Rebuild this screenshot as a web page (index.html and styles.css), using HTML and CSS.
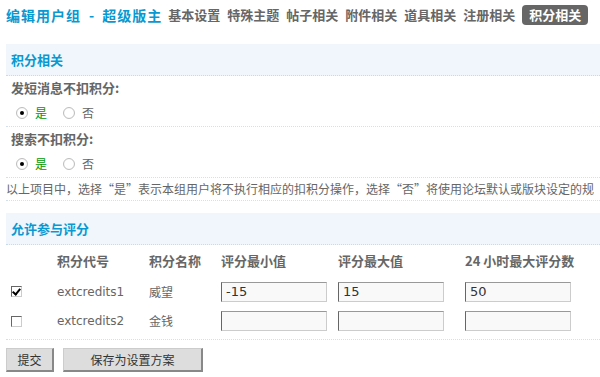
FILE: index.html
```html
<!DOCTYPE html>
<html lang="zh-CN">
<head>
    <meta charset="UTF-8">
    <title>编辑用户组 - 超级版主</title>
    <link rel="stylesheet" href="styles.css">
</head>
<body>
    <div class="header">
        <h1 class="title">编辑用户组<span class="sep">-</span>超级版主</h1>
        <ul class="tabs">
            <li>基本设置</li>
            <li>特殊主题</li>
            <li>帖子相关</li>
            <li>附件相关</li>
            <li>道具相关</li>
            <li>注册相关</li>
            <li class="current">积分相关</li>
        </ul>
    </div>

    <form class="settings">
        <div class="partition">积分相关</div>

        <div class="label">发短消息不扣积分:</div>
        <div class="options">
            <label class="choice"><input type="radio" name="nopm" value="1" checked> <span class="yes">是</span></label>
            <label class="choice"><input type="radio" name="nopm" value="0"> 否</label>
        </div>

        <div class="label">搜索不扣积分:</div>
        <div class="options">
            <label class="choice"><input type="radio" name="nosearch" value="1" checked> <span class="yes">是</span></label>
            <label class="choice"><input type="radio" name="nosearch" value="0"> 否</label>
        </div>

        <div class="note">以上项目中，选择“是”表示本组用户将不执行相应的扣积分操作，选择“否”将使用论坛默认或版块设定的规</div>

        <div class="partition gap">允许参与评分</div>

        <div class="credits">
            <table class="credit-table">
                <colgroup>
                    <col style="width: 51px">
                    <col style="width: 92px">
                    <col style="width: 72px">
                    <col style="width: 117px">
                    <col style="width: 127px">
                    <col style="width: 135px">
                </colgroup>
                <tr class="head">
                    <th></th>
                    <th>积分代号</th>
                    <th>积分名称</th>
                    <th>评分最小值</th>
                    <th>评分最大值</th>
                    <th>24 小时最大评分数</th>
                </tr>
                <tr class="first">
                    <td><input type="checkbox" class="check" checked></td>
                    <td class="code">extcredits1</td>
                    <td>威望</td>
                    <td><input type="text" class="txt" value="-15"></td>
                    <td><input type="text" class="txt" value="15"></td>
                    <td><input type="text" class="txt" value="50"></td>
                </tr>
                <tr>
                    <td><input type="checkbox" class="check"></td>
                    <td class="code">extcredits2</td>
                    <td>金钱</td>
                    <td><input type="text" class="txt" value=""></td>
                    <td><input type="text" class="txt" value=""></td>
                    <td><input type="text" class="txt" value=""></td>
                </tr>
            </table>
        </div>

        <div class="buttons">
            <button type="submit" class="btn submit">提交</button>
            <button type="button" class="btn scheme">保存为设置方案</button>
        </div>
    </form>
</body>
</html>
```

FILE: styles.css
```css
html, body {
    overflow: hidden;
}
body {
    margin: 0 0 0 6px;
    font: 12px/1.5 "Noto Sans CJK SC", sans-serif;
    color: #666;
    background: #fff;
}
.header {
    display: flex;
    align-items: center;
    height: 30px;
    margin-bottom: 14px;
    white-space: nowrap;
}
.title {
    margin: 0;
    font-size: 14px;
    font-weight: bold;
    line-height: 20px;
    letter-spacing: 1px;
    color: #0998d0;
}
.title .sep {
    margin: 0 7px 0 8px;
}
.tabs {
    display: flex;
    list-style: none;
    margin: 0 0 0 -1px;
    padding: 0;
}
.tabs li {
    margin-left: 7px;
    font-size: 13px;
    font-weight: bold;
    line-height: 20px;
    color: #666;
}
.tabs li.current {
    padding: 0 7px;
    background: #666;
    color: #fff;
    border-radius: 4px;
}
.partition {
    height: 31px;
    line-height: 31px;
    padding-left: 5px;
    background: #f0f6fc;
    border-bottom: 1px dotted #c6dbee;
    font-size: 13px;
    font-weight: bold;
    color: #0998d0;
}
.partition.gap {
    margin-top: 12px;
}
.label {
    height: 24px;
    line-height: 24px;
    padding-left: 5px;
    font-size: 13px;
    font-weight: bold;
}
.options {
    display: flex;
    align-items: center;
    height: 26px;
    padding-left: 10px;
    border-bottom: 1px dotted #d3e1ee;
}
.choice {
    display: flex;
    align-items: center;
    margin-right: 16px;
    font-size: 12px;
    color: #666;
}
.choice input {
    margin: 0 7px 0 0;
}
.yes {
    color: #090;
}
input[type="radio"] {
    appearance: none;
    width: 12px;
    height: 12px;
    border: 1px solid #bdbdbd;
    border-radius: 50%;
    background: radial-gradient(circle, #fff 55%, #e6e6e6 100%);
    position: relative;
}
input[type="radio"]:checked::after {
    content: "";
    position: absolute;
    left: 3px;
    top: 3px;
    width: 4px;
    height: 4px;
    border-radius: 50%;
    background: #000;
}
.note {
    height: 22px;
    line-height: 22px;
    white-space: nowrap;
    border-bottom: 1px dotted #d3e1ee;
}
.credits {
    padding-bottom: 3px;
    border-bottom: 1px dotted #d3e1ee;
}
.credit-table {
    table-layout: fixed;
    width: 594px;
    border-collapse: collapse;
}
.credit-table th {
    height: 32px;
    padding: 0;
    text-align: left;
    font-size: 13px;
    font-weight: bold;
    color: #666;
    white-space: nowrap;
}
.credit-table td {
    height: 30px;
    padding: 0;
    white-space: nowrap;
}
.credit-table tr.first td {
    height: 29px;
}
.code {
    font-family: "DejaVu Sans", sans-serif;
    font-size: 12px;
}
.check {
    appearance: none;
    display: block;
    width: 11px;
    height: 11px;
    margin: 0 0 0 5px;
    border: 1px solid;
    border-color: #666 #ccc #ccc #666;
    background: #fff;
    position: relative;
}
.check:checked::after {
    content: "";
    position: absolute;
    left: 2px;
    top: 0;
    width: 3px;
    height: 6px;
    border: solid #000;
    border-width: 0 2px 2px 0;
    transform: rotate(40deg);
}
.txt {
    display: block;
    box-sizing: border-box;
    width: 106px;
    height: 20px;
    padding: 0 4px;
    border: 1px solid;
    border-color: #999 #ccc #ccc #666;
    background: #f9f9f9;
    font: 13px "DejaVu Sans", sans-serif;
    color: #333;
}
.buttons {
    display: flex;
    margin-top: 8px;
}
.btn {
    height: 24px;
    padding: 0;
    margin-right: 9px;
    border-style: solid;
    border-width: 1px 2px 2px 1px;
    border-color: #ccc #888 #888 #ccc;
    background: #ddd;
    font: 12px "Noto Sans CJK SC", sans-serif;
    color: #333;
}
.submit {
    width: 48px;
}
.scheme {
    width: 140px;
}
```
